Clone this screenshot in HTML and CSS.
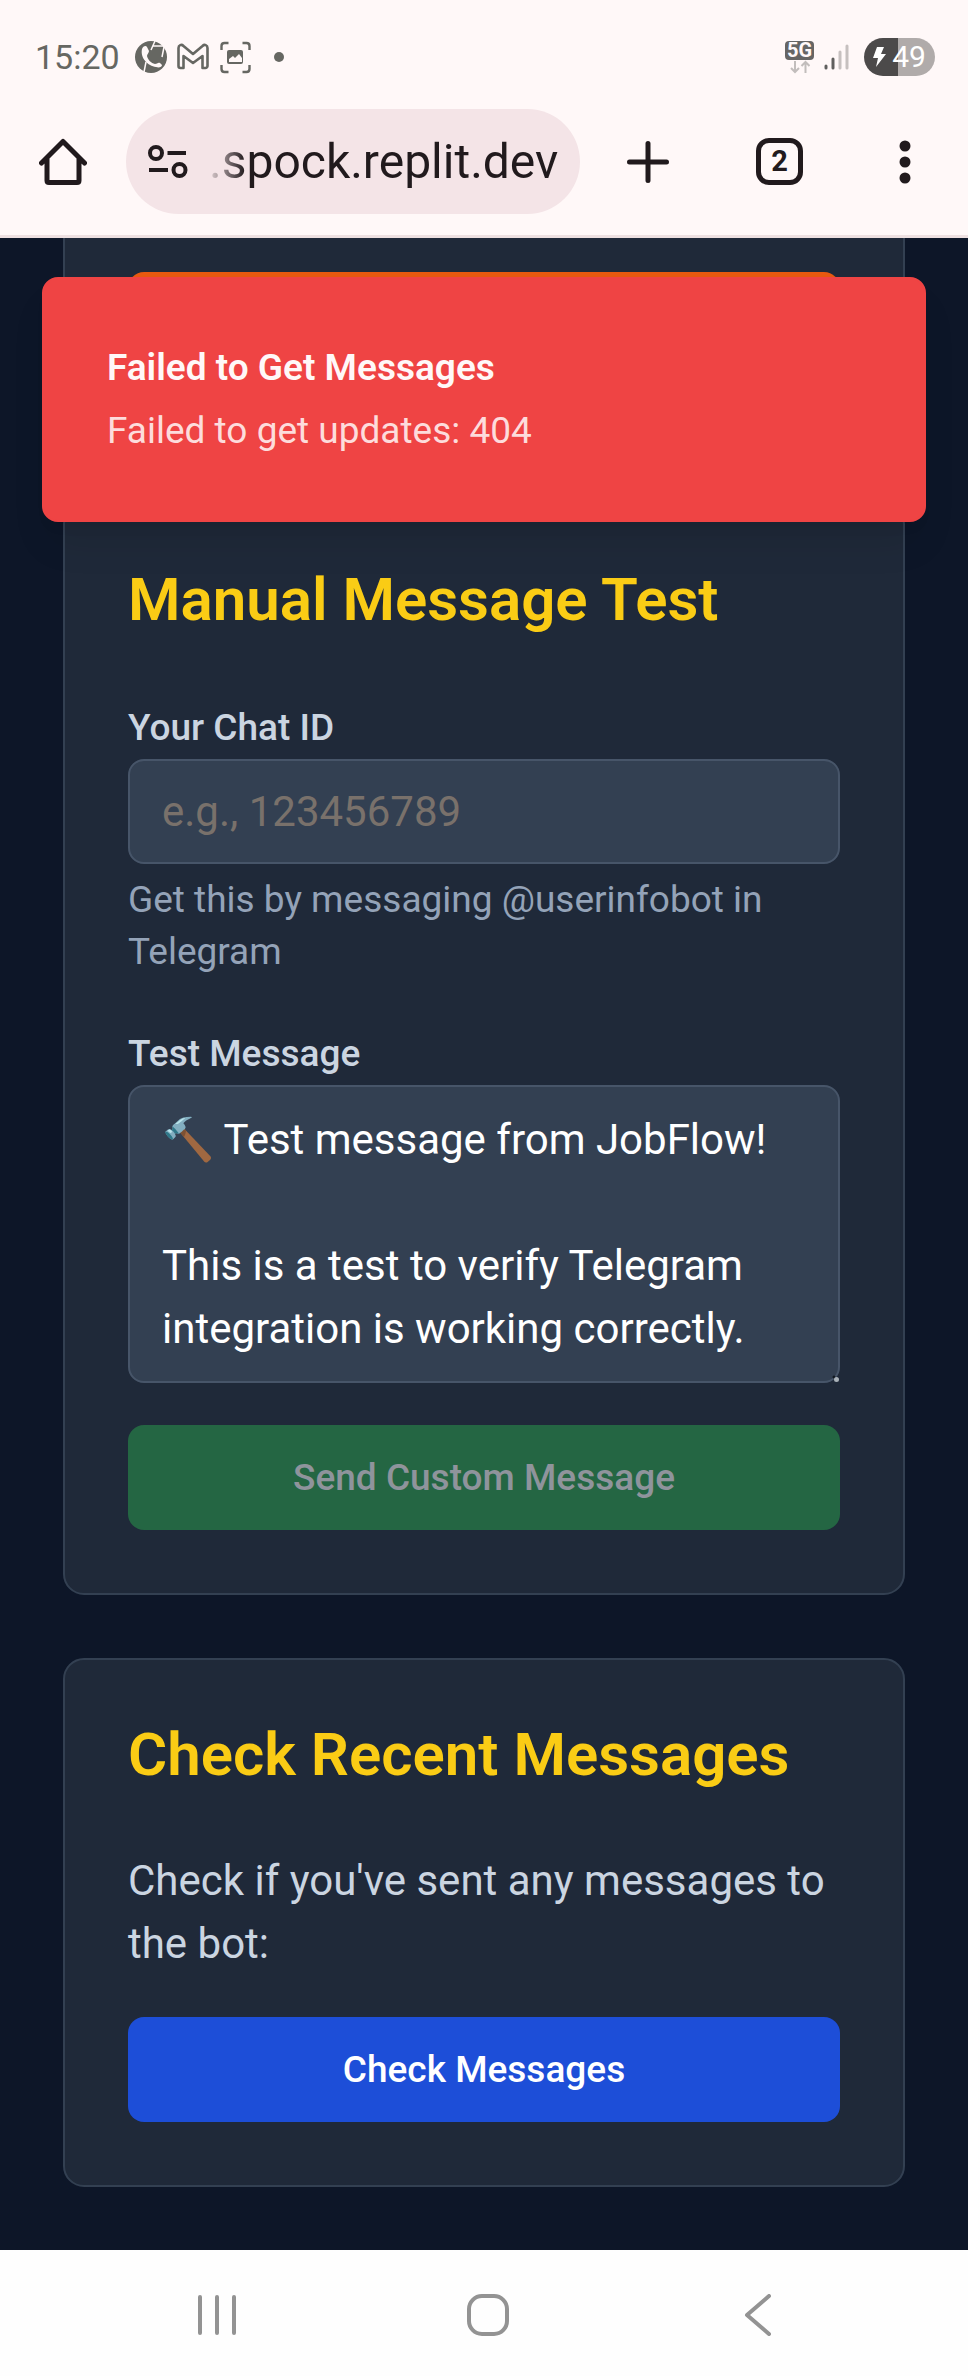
FILE: index.html
```html
<!DOCTYPE html>
<html lang="en">
<head>
<meta charset="utf-8">
<meta name="viewport" content="width=device-width, initial-scale=1">
<title>JobFlow Telegram Test</title>
<link rel="stylesheet" href="styles.css">
</head>
<body>
<div class="screen">
  <header class="browser">
    <div class="status">
      <time class="clock">15:20</time>
      <svg class="status-left" width="158" height="40" viewBox="0 0 158 40" aria-hidden="true">
        <circle cx="16" cy="20" r="16" fill="#666762"/>
        <path d="M7 12c1-3 4-4 5-2l2 4c0 2-2 3-2 5 1 4 4 7 8 8 2 0 3-2 5-1l2 2c0 2-3 3-6 2C13 29 5 21 7 12z" fill="#fff8f8"/>
        <path d="M20 4l-4 9M18 9h11M29 10l-2 10M11 25l-2 10" fill="none" stroke="#fff8f8" stroke-width="1.500"/>
        <path d="M43.500 11v18c0 2 1 2 2 2h3V19l9.500 7 9.500-7v12h3c1 0 2-1 2-2V11c0-3-3-4-5-2L58 17l-9.500-8c-2-2-5-1-5 2z" fill="none" stroke="#666762" stroke-width="2.600" stroke-linejoin="round"/>
        <path d="M86.500 13V9q0-3 3-3h4M107.500 6h4q3 0 3 3v4M114.500 28v4q0 3-3 3h-4M93.500 35h-4q-3 0-3-3v-4" fill="none" stroke="#666762" stroke-width="2.400"/>
        <rect x="92" y="13" width="16" height="14" rx="2" fill="#666762"/>
        <path d="M94 25v-3l4-3 2 2 4-4 3 4v4z" fill="#fff8f8"/>
        <circle cx="144" cy="20" r="5" fill="#666762"/>
      </svg>
      <span class="network">
        <span class="network-type">5G</span>
        <svg width="20" height="14" viewBox="0 0 20 14" aria-hidden="true"><path d="M5 1v11M1 8l4 4 4-4M15.500 13V2M11.500 6l4-4 4 4" fill="none" stroke="#c2bdbc" stroke-width="2"/></svg>
      </span>
      <svg class="signal" width="26" height="28" viewBox="0 0 26 28" aria-hidden="true"><g stroke-width="3" stroke-linecap="round"><path d="M2 23v2M9 16v9" stroke="#605f5e"/><path d="M16 9v16M23 3v22" stroke="#c6c0bf"/></g></svg>
      <span class="battery">
        <svg width="13" height="20" viewBox="0 0 13 20" aria-hidden="true"><path d="M4 0h7L8 7h5L3 20l2-9H0z" fill="#fff"/></svg>
        <span>49</span>
      </span>
    </div>
    <div class="toolbar">
      <button class="tool" type="button" aria-label="Home">
        <svg width="48" height="48" viewBox="0 0 48 48"><path d="M2.500 25L24 3.500 45.500 25M8 20v22.500q0 2 2 2h28q2 0 2-2V20" fill="none" stroke="#211a1d" stroke-width="5" stroke-linejoin="round" stroke-linecap="round"/></svg>
      </button>
      <div class="omnibox">
        <button class="tool" type="button" aria-label="Site settings">
          <svg width="40" height="34" viewBox="0 0 40 34"><g fill="none" stroke="#211a1d" stroke-width="4"><circle cx="8" cy="8" r="6"/><circle cx="31.500" cy="25" r="6"/><path d="M19.500 8H38M1 25h19"/></g></svg>
        </button>
        <input class="url" type="text" value=".spock.replit.dev" aria-label="Address">
      </div>
      <button class="tool new-tab" type="button" aria-label="New tab">
        <svg width="42" height="42" viewBox="0 0 42 42"><path d="M21 2.500v37M2.500 21h37" stroke="#211a1d" stroke-width="5" stroke-linecap="round"/></svg>
      </button>
      <button class="tool tabs" type="button" aria-label="Tabs">2</button>
      <button class="tool menu" type="button" aria-label="Menu">
        <svg width="12" height="44" viewBox="0 0 12 44"><g fill="#211a1d"><circle cx="6" cy="6" r="5.500"/><circle cx="6" cy="22" r="5.500"/><circle cx="6" cy="38" r="5.500"/></g></svg>
      </button>
    </div>
  </header>

  <main class="page">
    <section class="card card-cut">
      <button class="btn btn-orange" type="button" aria-label="Send test"></button>
    </section>

    <section class="card">
      <h2 class="title">Manual Message Test</h2>
      <form class="form">
        <div>
          <label class="label" for="chat">Your Chat ID</label>
          <input class="field" id="chat" type="text" placeholder="e.g., 123456789">
          <p class="hint">Get this by messaging @userinfobot in Telegram</p>
        </div>
        <div>
          <label class="label" for="message">Test Message</label>
          <div class="area-wrap">
            <textarea class="field area" id="message" rows="4">🔨 Test message from JobFlow!

This is a test to verify Telegram integration is working correctly.</textarea>
            <svg class="grip" width="8" height="8" viewBox="0 0 8 8" aria-hidden="true"><circle cx="2" cy="2" r="1.500" fill="#111820"/><circle cx="4.500" cy="4.500" r="2.500" fill="#a9b1b8"/></svg>
          </div>
        </div>
        <button class="btn btn-green" type="button" disabled>Send Custom Message</button>
      </form>
    </section>

    <section class="card">
      <h2 class="title">Check Recent Messages</h2>
      <div class="form">
        <p class="text">Check if you've sent any messages to the bot:</p>
        <button class="btn btn-blue" type="button">Check Messages</button>
      </div>
    </section>

    <div class="toast" role="alert">
      <strong class="toast-title">Failed to Get Messages</strong>
      <p class="toast-text">Failed to get updates: 404</p>
    </div>
  </main>

  <nav class="system-nav" aria-label="System">
    <button class="tool" type="button" aria-label="Recents"><svg width="42" height="42" viewBox="0 0 42 42"><path d="M4 3v36M21 3v36M38 3v36" stroke="#939393" stroke-width="4" stroke-linecap="round"/></svg></button>
    <button class="tool" type="button" aria-label="Home screen"><svg width="42" height="42" viewBox="0 0 42 42"><rect x="2" y="2" width="38" height="38" rx="13" fill="none" stroke="#939393" stroke-width="4"/></svg></button>
    <button class="tool" type="button" aria-label="Back"><svg width="42" height="42" viewBox="0 0 42 42"><path d="M32 2L10 21l22 19" fill="none" stroke="#939393" stroke-width="4" stroke-linecap="round" stroke-linejoin="round"/></svg></button>
  </nav>
</div>
</body>
</html>
```
FILE: styles.css
```css
* { box-sizing: border-box; margin: 0; padding: 0; }

body {
  background: #0d1628;
  font-family: Roboto, "Liberation Sans", sans-serif;
  font-size: 42px;
  line-height: 63px;
}

button, input, textarea { font: inherit; border: 0; }
svg { display: block; flex: none; }

.screen { display: flex; flex-direction: column; min-height: 100vh; }

.browser {
  display: flex;
  flex-direction: column;
  gap: 32px;
  padding: 37px 33px 21px;
  background: #fff8f8;
  border-bottom: 3px solid #eee0e1;
}

.status { display: flex; align-items: center; height: 40px; color: #666762; }
.clock { width: 102px; font-size: 34px; line-height: 40px; padding-left: 2px; }
.status-left { margin-right: auto; }

.network { display: flex; flex-direction: column; align-items: center; }
.network-type {
  width: 29px;
  border-radius: 4px;
  background: #666564;
  color: #fff8f8;
  font-size: 20px;
  font-weight: 700;
  line-height: 19px;
  text-align: center;
}
.signal { margin: 0 14px 0 10px; }
.battery {
  display: flex;
  align-items: center;
  justify-content: center;
  gap: 6px;
  width: 71px;
  height: 38px;
  border-radius: 19px;
  background: linear-gradient(90deg, #4c4a4a 48%, #b0abaa 48%);
  color: #fff;
  font-size: 30px;
  line-height: 38px;
}

.toolbar { display: flex; align-items: center; padding: 0 24px 0 6px; }
.tool { display: flex; align-items: center; justify-content: center; background: none; color: #211a1d; }
.omnibox {
  display: flex;
  flex: 1;
  align-items: center;
  gap: 21px;
  min-width: 0;
  height: 105px;
  margin: 0 47px 0 39px;
  padding: 0 16px 0 22px;
  border-radius: 53px;
  background: #f4e4e7;
}
.url {
  flex: 1;
  min-width: 0;
  background: none;
  color: #211a1d;
  font-size: 48px;
  -webkit-mask-image: linear-gradient(90deg, rgba(0, 0, 0, .1), #000 36px);
  mask-image: linear-gradient(90deg, rgba(0, 0, 0, .1), #000 36px);
}
.tabs {
  width: 47px;
  height: 47px;
  margin: 0 96px 0 87px;
  border: 5px solid #211a1d;
  border-radius: 13px;
  font-size: 29px;
  font-weight: 700;
  line-height: 37px;
}

.page {
  position: relative;
  display: flex;
  flex: 1;
  flex-direction: column;
  gap: 63px;
  padding: 0 63px 63px;
  overflow: hidden;
}

.card {
  padding: 63px;
  border: 2px solid #334052;
  border-radius: 21px;
  background: #1f2939;
}
.card-cut { padding-top: 34px; padding-bottom: 61px; border-top: 0; border-radius: 0 0 21px 21px; }

.title { color: #facc15; font-size: 60px; font-weight: 600; line-height: 63px; }
.card .title { margin-bottom: 63px; }
.form { display: flex; flex-direction: column; gap: 42px; }

.label {
  display: block;
  padding: 8px 0 5px;
  color: #cbd5e1;
  font-size: 37px;
  font-weight: 500;
  line-height: 52px;
}
.field {
  display: block;
  width: 100%;
  height: 105px;
  padding: 19px 32px;
  border: 2px solid #475569;
  border-radius: 16px;
  background: #334052;
  color: #fff;
}
.field::placeholder { color: #79716b; opacity: 1; }
.area-wrap { position: relative; }
.area { height: auto; padding: 21px 32px; resize: none; overflow: hidden; }
.grip { position: absolute; right: 0; bottom: 0; }
.hint { margin-top: 10px; color: #94a3b8; font-size: 37px; line-height: 52px; }
.text { color: #cbd5e1; }

.btn {
  display: block;
  width: 100%;
  height: 105px;
  border-radius: 16px;
  color: #fff;
  font-size: 37px;
  font-weight: 500;
  line-height: 52px;
}
.btn-orange { background: #e8590f; }
.btn-green { background: #246643; color: #8f949c; }
.btn-blue { background: #1d4ed8; }

.toast {
  position: absolute;
  top: 39px;
  left: 42px;
  right: 42px;
  display: flex;
  flex-direction: column;
  gap: 11px;
  padding: 63px;
  border: 2px solid #ef4444;
  border-radius: 16px;
  background: #ef4444;
  box-shadow: 0 26px 39px -8px rgba(0, 0, 0, .1), 0 10px 16px -10px rgba(0, 0, 0, .1);
  color: #fff8f8;
  font-size: 37px;
  line-height: 52px;
}
.toast-title { font-weight: 600; }
.toast-text { color: #fddcdc; }

.system-nav {
  display: flex;
  align-items: center;
  justify-content: space-between;
  height: 126px;
  padding: 4px 189px 0 196px;
  background: #fefefe;
}
```
